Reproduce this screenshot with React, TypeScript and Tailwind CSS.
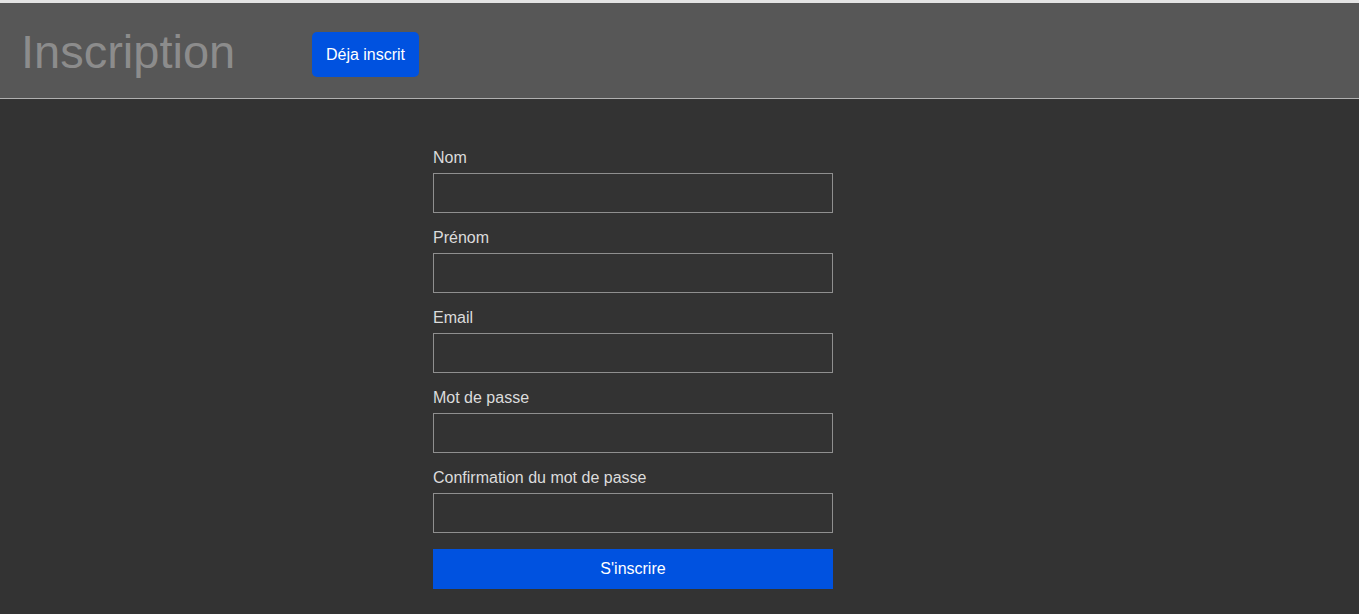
const fields = [
  { id: "nom", label: "Nom", type: "text" },
  { id: "prenom", label: "Prénom", type: "text" },
  { id: "email", label: "Email", type: "email" },
  { id: "password", label: "Mot de passe", type: "password" },
  { id: "confirm", label: "Confirmation du mot de passe", type: "password" },
];

export default function App() {
  return (
    <div className="min-h-screen bg-[#333333] font-['Liberation_Sans',Arial,sans-serif]">
      <header className="flex h-[99px] items-center border-t-[3px] border-b border-t-[#e4e4e4] border-b-[#b0b0b0] bg-[#575757] pl-[21px]">
        <h1 className="mt-[1px] w-[291px] text-[47px] leading-none text-[#8c8c8c]">Inscription</h1>
        <button className="mt-[8px] h-[45px] w-[107px] rounded-[5px] bg-[#0052e0] text-[16px] text-white">
          Déja inscrit
        </button>
      </header>

      <form className="ml-[433px] flex w-[400px] flex-col pt-[50px]" onSubmit={(e) => e.preventDefault()}>
        {fields.map((f) => (
          <div key={f.id} className="flex flex-col">
            <label htmlFor={f.id} className="mb-[7px] text-[16px] leading-[17px] text-[#dcdcdc]">
              {f.label}
            </label>
            <input
              id={f.id}
              type={f.type}
              className="mb-4 h-10 border border-[#8f8f8f] bg-transparent px-2 text-white outline-none"
            />
          </div>
        ))}
        <button type="submit" className="h-10 bg-[#0052e0] text-[16px] text-white">
          S'inscrire
        </button>
      </form>
    </div>
  );
}
